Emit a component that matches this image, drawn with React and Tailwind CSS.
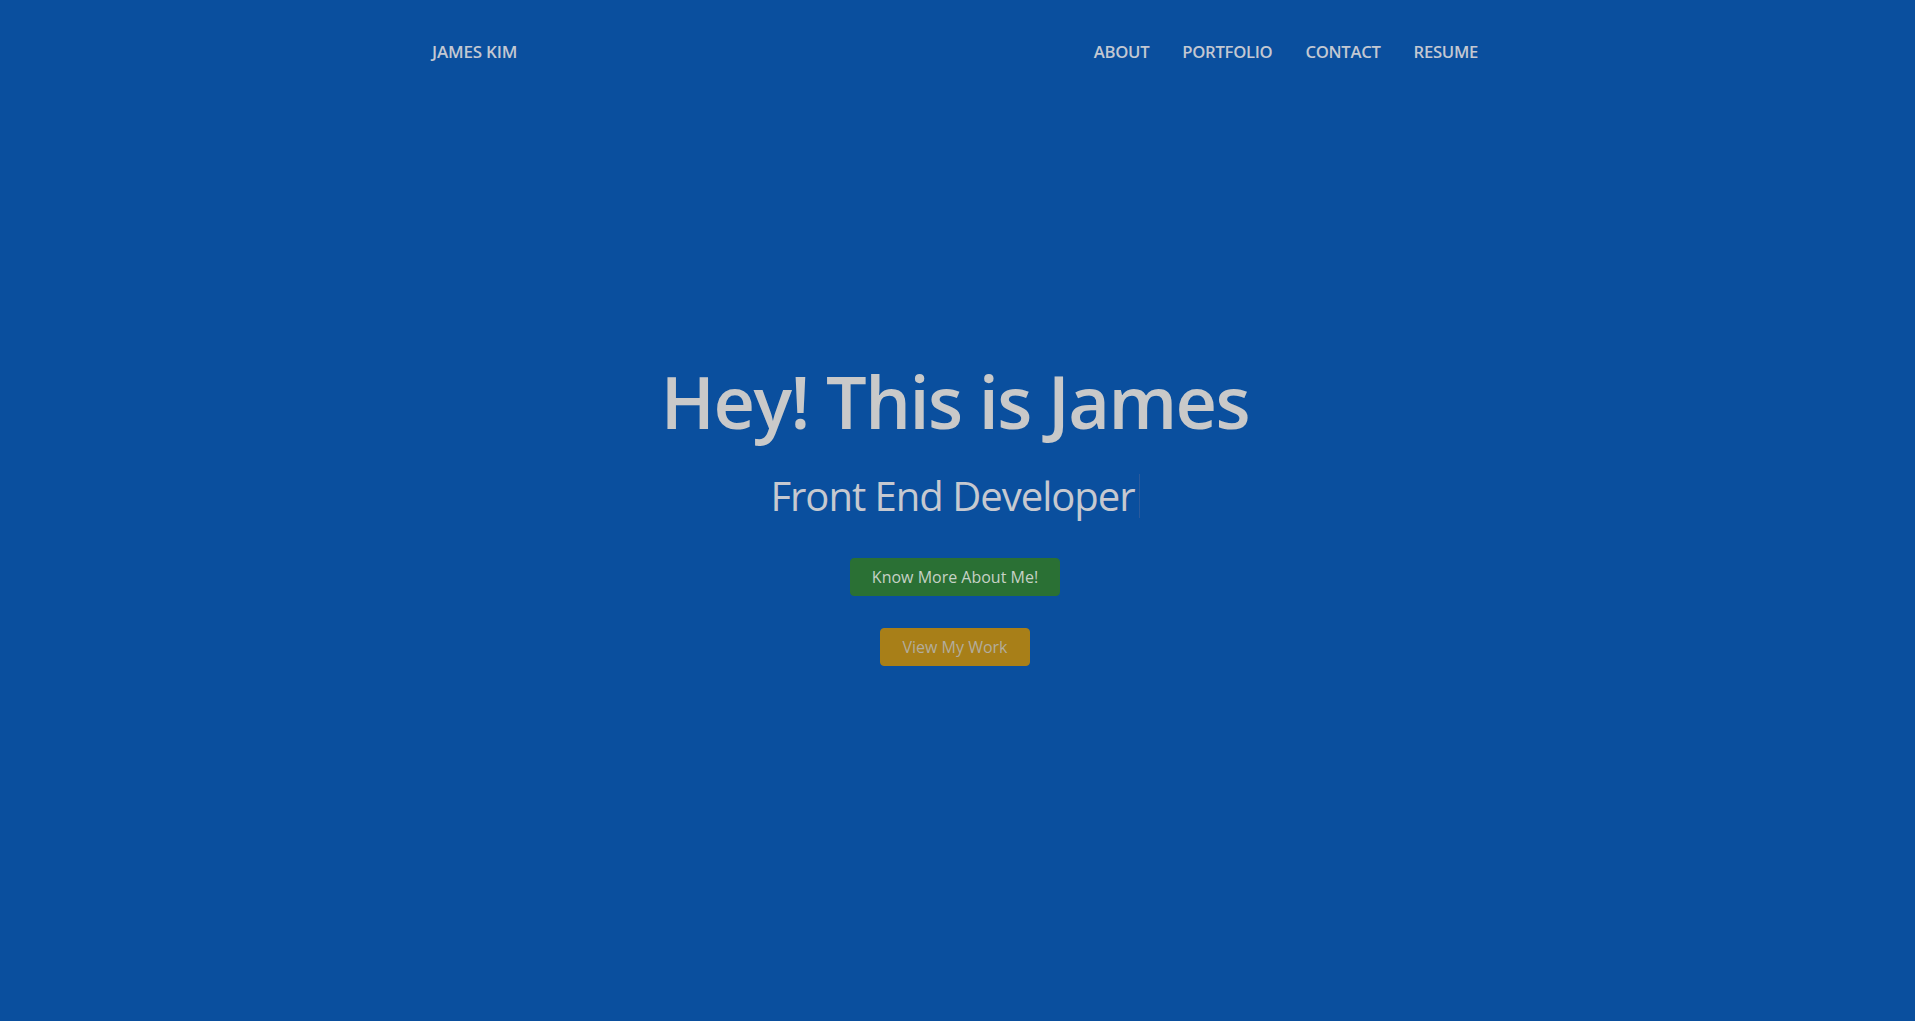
import { useState } from 'react';

const navLinks = ['ABOUT', 'PORTFOLIO', 'CONTACT', 'RESUME'];

function NavBar() {
  return (
    <nav className="h-[104px] flex items-center justify-between pl-[432px] pr-[437px]">
      <a href="#" className="text-[17px] font-semibold text-[#c3c8d2] tracking-[-0.2px]">
        JAMES KIM
      </a>
      <ul className="flex items-center gap-[33px]">
        {navLinks.map((link) => (
          <li key={link}>
            <a href="#" className="text-[16.7px] font-semibold text-[#c3c8d2] tracking-[-0.3px]">
              {link}
            </a>
          </li>
        ))}
      </ul>
    </nav>
  );
}

export default function App() {
  const [role] = useState('Front End Developer');

  return (
    <div
      className="min-h-screen bg-[#0a4f9e] text-[#c8c8c8]"
      style={{ fontFamily: '"Open Sans", "Noto Sans", sans-serif' }}
    >
      <NavBar />

      {/* Hero */}
      <section className="flex flex-col items-center pt-[254px] pb-[356px] pr-[5px]">
        <h1 className="text-[72px] leading-[86.4px] font-semibold text-[#c9c9c9] tracking-[-1.5px]">
          Hey! This is James
        </h1>
        <h2 className="mt-[28px] text-[40px] leading-[48px] font-normal text-[#c6c9d0] tracking-[-1px] flex items-center">
          {role}
          <span className="ml-[4px] w-px h-[44px] bg-[#2a5a9c]" />
        </h2>
        <button className="mt-[38px] px-[21px] py-[6px] border border-[#2a7034] rounded bg-[#2a7034] text-base leading-6 text-[#c6d2c6]">
          Know More About Me!
        </button>
        <button className="mt-[32px] px-[21px] py-[6px] border border-[#a87f18] rounded bg-[#a87f18] text-base leading-6 text-[#b3ad9d]">
          View My Work
        </button>
      </section>
    </div>
  );
}
